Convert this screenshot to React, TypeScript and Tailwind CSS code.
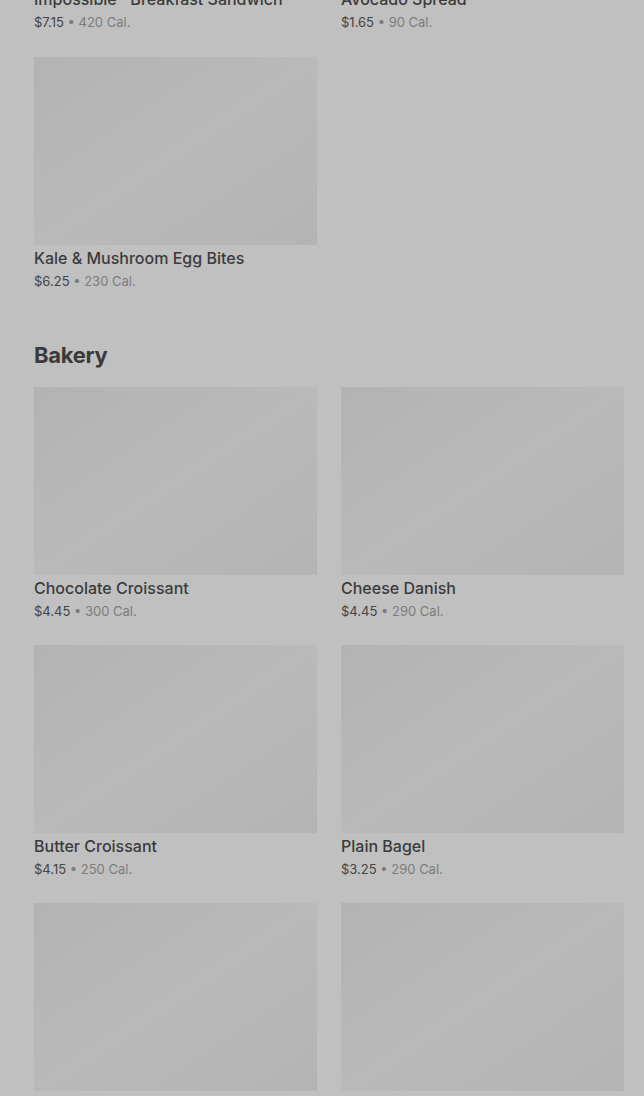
const topRow = [
  { name: "Impossible™ Breakfast Sandwich", price: "$7.15", cal: "420 Cal." },
  { name: "Avocado Spread", price: "$1.65", cal: "90 Cal." },
];

const eggBites = [{ name: "Kale & Mushroom Egg Bites", price: "$6.25", cal: "230 Cal." }];

type Item = { name: string; price: string; cal?: string };

const bakery: Item[] = [
  { name: "Chocolate Croissant", price: "$4.45", cal: "300 Cal." },
  { name: "Cheese Danish", price: "$4.45", cal: "290 Cal." },
  { name: "Butter Croissant", price: "$4.15", cal: "250 Cal." },
  { name: "Plain Bagel", price: "$3.25", cal: "290 Cal." },
];

function ItemText({ item }: { item: Item }) {
  return (
    <div>
      <div className="text-[16px] leading-[22px] font-medium text-[#3b3b3b] truncate">{item.name}</div>
      <div className="mt-[2px] text-[13px] leading-[20px] text-[#444444]">
        {item.price} <span className="text-[#7c7c7c]">• {item.cal}</span>
      </div>
    </div>
  );
}

function Card({ item }: { item?: Item }) {
  return (
    <div>
      <div className="h-[188px] w-full bg-gradient-to-br from-[#b3b3b3] via-[#b9b9b9] to-[#b4b4b4]" />
      {item && (
        <div className="mt-[2px]">
          <ItemText item={item} />
        </div>
      )}
    </div>
  );
}

export default function App() {
  return (
    <div
      className="min-h-screen h-[1096px] overflow-hidden bg-[#c0c0c0] pl-[34px] pr-[20px]"
      style={{ fontFamily: "Inter, 'Noto Sans', sans-serif" }}
    >
      {/* rows scrolled off the top */}
      <div className="grid grid-cols-2 gap-x-6 -mt-[12px]">
        {topRow.map((item) => (
          <ItemText key={item.name} item={item} />
        ))}
      </div>

      <div className="grid grid-cols-2 gap-x-6 gap-y-6 mt-[25px]">
        {eggBites.map((item) => (
          <Card key={item.name} item={item} />
        ))}
      </div>

      <h2 className="mt-[50px] text-[22px] leading-[28px] font-bold text-[#3a3a3a] tracking-[-0.3px]">Bakery</h2>

      <div className="grid grid-cols-2 gap-x-6 gap-y-6 mt-[18px]">
        {bakery.map((item) => (
          <Card key={item.name} item={item} />
        ))}
        <Card />
        <Card />
      </div>
    </div>
  );
}
